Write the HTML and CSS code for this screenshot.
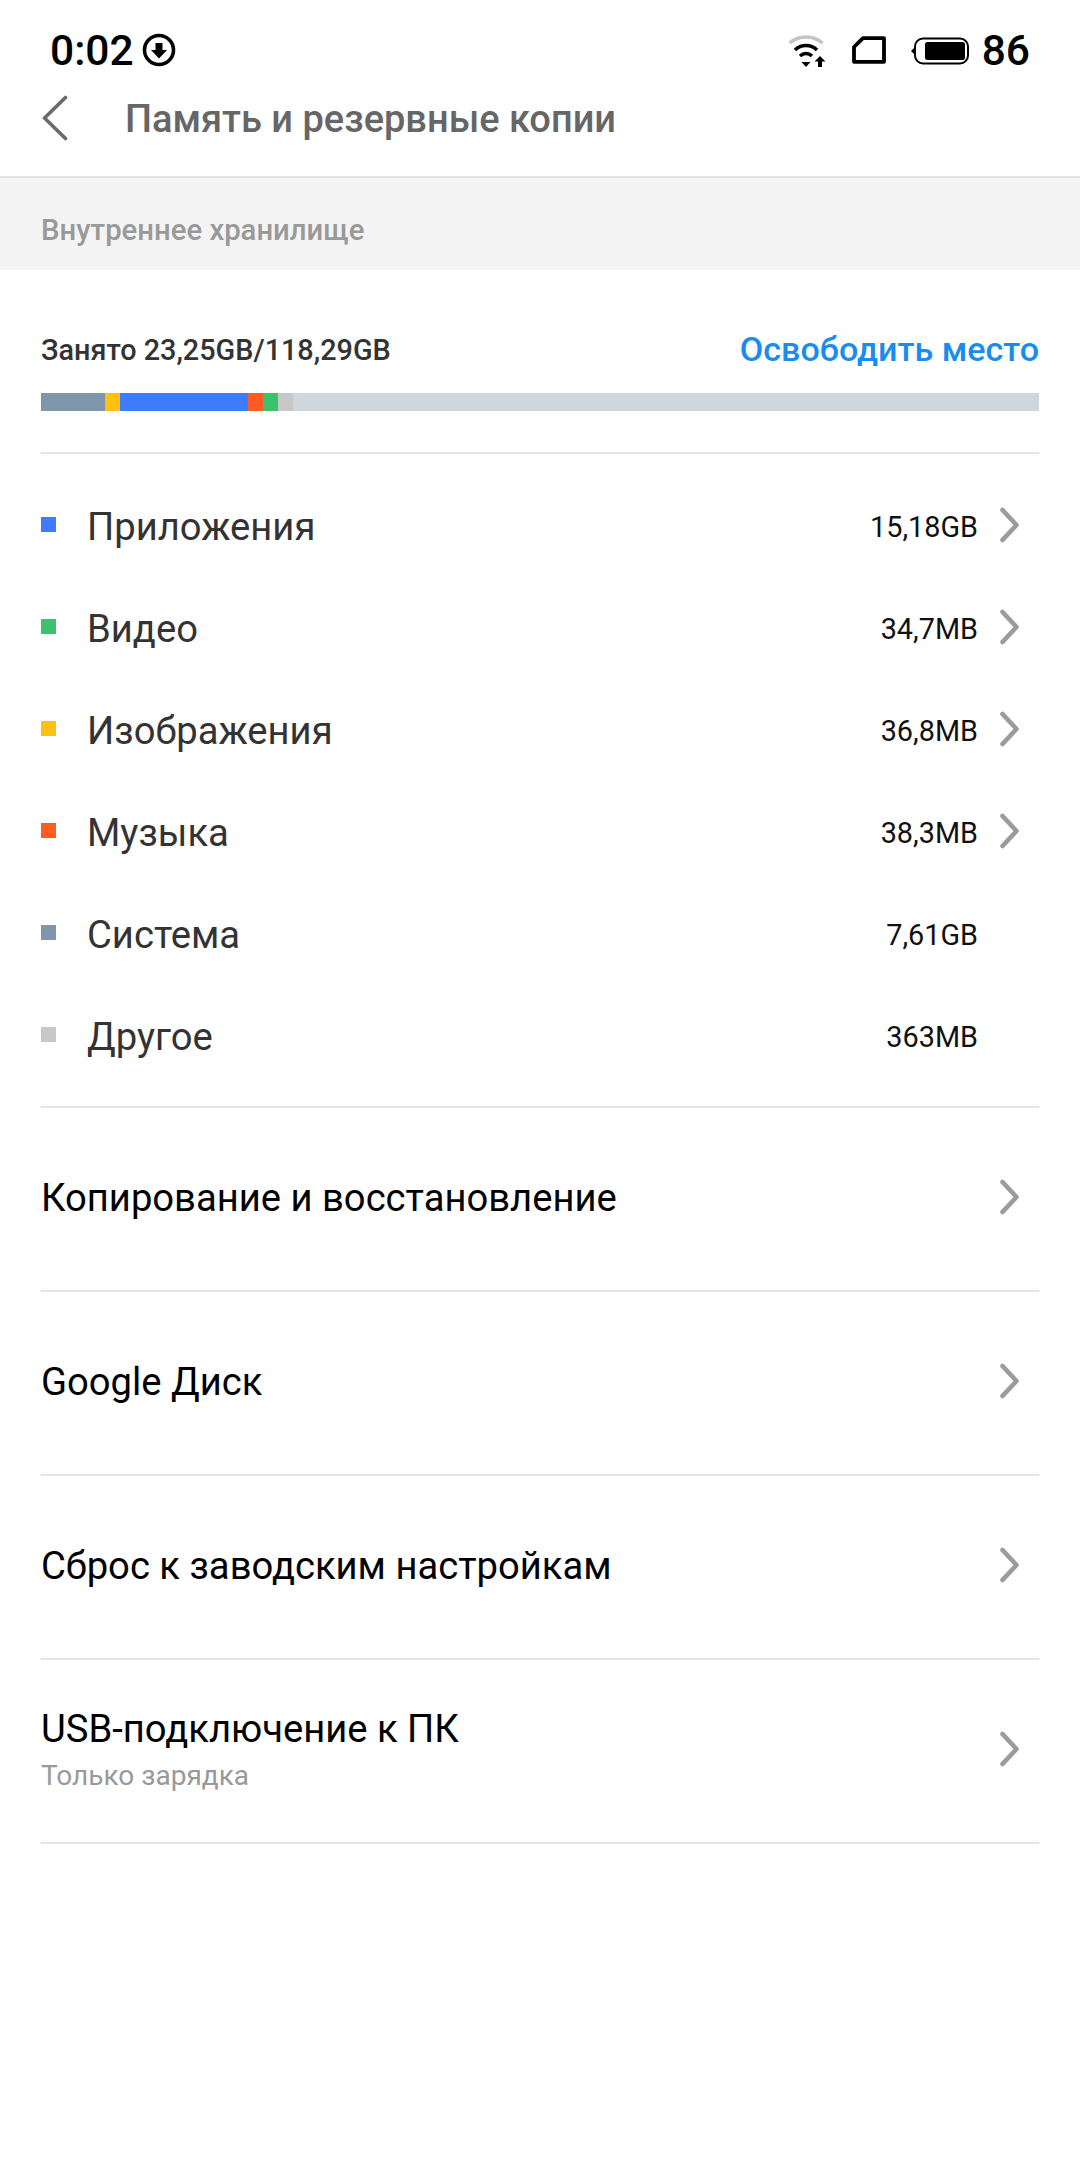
FILE: index.html
```html
<!DOCTYPE html>
<html lang="ru">
<head>
<meta charset="utf-8">
<title>Память и резервные копии</title>
<link rel="stylesheet" href="styles.css">
</head>
<body>
<div class="status">
  <div class="status-left">
    <span class="time">0:02</span>
    <svg class="ic-dl" width="34" height="34" viewBox="0 0 34 34"><circle cx="17" cy="17" r="14.5" fill="none" stroke="#000" stroke-width="3.6"/><path d="M13.500 10h7v7h4.500L17 25.500 9 17h4.500z" fill="#000"/></svg>
  </div>
  <div class="status-right">
    <svg class="ic-wifi" width="38" height="32" viewBox="0 0 38 32"><path d="M1.500 8C11 0 25 0 34.500 8" fill="none" stroke="#c4c4c4" stroke-width="3.500"/><path d="M7 15C13 9 23 9 29 15" fill="none" stroke="#000" stroke-width="3.500"/><path d="M12 21C15.500 17.500 20.500 17.500 24 21" fill="none" stroke="#000" stroke-width="3.500"/><path d="M13.500 27h9L18 32z" fill="#000"/><path d="M32 21l5.500 5.500H34v5.500h-4v-5.500h-3.500z" fill="#000"/></svg>
    <svg class="ic-sim" width="34" height="28" viewBox="0 0 34 28"><path d="M11 2.200H32V25.800H2V11z" fill="none" stroke="#000" stroke-width="3.800" stroke-linejoin="round"/></svg>
    <svg class="ic-batt" width="58" height="28" viewBox="0 0 58 28"><path d="M0 14l4-4v8z" fill="#000"/><rect x="4" y="1.500" width="53" height="25" rx="8" fill="none" stroke="#000" stroke-width="2"/><rect x="14" y="5" width="40" height="18" rx="2.500" fill="#000"/></svg>
    <span class="batt-num">86</span>
  </div>
</div>

<header class="appbar">
  <svg class="back" width="30" height="46" viewBox="0 0 30 46"><path d="M24.500 2.500L3.500 23l21 20.500" fill="none" stroke="#6a6a6a" stroke-width="3.600" stroke-linecap="round" stroke-linejoin="round"/></svg>
  <h1 class="title">Память и резервные копии</h1>
</header>

<div class="section-head">Внутреннее хранилище</div>

<section class="summary">
  <div class="summary-top">
    <span class="used">Занято 23,25GB/118,29GB</span>
    <span class="free">Освободить место</span>
  </div>
  <div class="bar">
    <i class="seg c-sys w64"></i><i class="seg c-img w15"></i><i class="seg c-app w128"></i><i class="seg c-mus w15"></i><i class="seg c-vid w15"></i><i class="seg c-oth w15"></i>
  </div>
</section>

<ul class="cats">
  <li class="cat"><i class="dot c-app"></i><span class="cat-name">Приложения</span><span class="cat-size">15,18GB</span><svg class="chev" width="24" height="36" viewBox="0 0 24 36"><path d="M5.500 3L19.500 18L5.500 33" fill="none" stroke="#9b9b9b" stroke-width="4.600" stroke-linecap="round" stroke-linejoin="round"/></svg></li>
  <li class="cat"><i class="dot c-vid"></i><span class="cat-name">Видео</span><span class="cat-size">34,7MB</span><svg class="chev" width="24" height="36" viewBox="0 0 24 36"><path d="M5.500 3L19.500 18L5.500 33" fill="none" stroke="#9b9b9b" stroke-width="4.600" stroke-linecap="round" stroke-linejoin="round"/></svg></li>
  <li class="cat"><i class="dot c-img"></i><span class="cat-name">Изображения</span><span class="cat-size">36,8MB</span><svg class="chev" width="24" height="36" viewBox="0 0 24 36"><path d="M5.500 3L19.500 18L5.500 33" fill="none" stroke="#9b9b9b" stroke-width="4.600" stroke-linecap="round" stroke-linejoin="round"/></svg></li>
  <li class="cat"><i class="dot c-mus"></i><span class="cat-name">Музыка</span><span class="cat-size">38,3MB</span><svg class="chev" width="24" height="36" viewBox="0 0 24 36"><path d="M5.500 3L19.500 18L5.500 33" fill="none" stroke="#9b9b9b" stroke-width="4.600" stroke-linecap="round" stroke-linejoin="round"/></svg></li>
  <li class="cat"><i class="dot c-sys"></i><span class="cat-name">Система</span><span class="cat-size">7,61GB</span><span class="chev-space"></span></li>
  <li class="cat"><i class="dot c-oth"></i><span class="cat-name">Другое</span><span class="cat-size">363MB</span><span class="chev-space"></span></li>
</ul>

<ul class="menu">
  <li class="item"><div class="item-text"><span class="item-name">Копирование и восстановление</span></div><svg class="chev" width="24" height="36" viewBox="0 0 24 36"><path d="M5.500 3L19.500 18L5.500 33" fill="none" stroke="#9b9b9b" stroke-width="4.600" stroke-linecap="round" stroke-linejoin="round"/></svg></li>
  <li class="item"><div class="item-text"><span class="item-name">Google Диск</span></div><svg class="chev" width="24" height="36" viewBox="0 0 24 36"><path d="M5.500 3L19.500 18L5.500 33" fill="none" stroke="#9b9b9b" stroke-width="4.600" stroke-linecap="round" stroke-linejoin="round"/></svg></li>
  <li class="item"><div class="item-text"><span class="item-name">Сброс к заводским настройкам</span></div><svg class="chev" width="24" height="36" viewBox="0 0 24 36"><path d="M5.500 3L19.500 18L5.500 33" fill="none" stroke="#9b9b9b" stroke-width="4.600" stroke-linecap="round" stroke-linejoin="round"/></svg></li>
  <li class="item"><div class="item-text"><span class="item-name">USB-подключение к ПК</span><span class="item-sub">Только зарядка</span></div><svg class="chev" width="24" height="36" viewBox="0 0 24 36"><path d="M5.500 3L19.500 18L5.500 33" fill="none" stroke="#9b9b9b" stroke-width="4.600" stroke-linecap="round" stroke-linejoin="round"/></svg></li>
</ul>
</body>
</html>
```
FILE: styles.css
```css
* { box-sizing: border-box; }
html, body { margin: 0; padding: 0; }
body { width: 1080px; height: 2160px; background: #fff; font-family: Roboto, "Noto Sans", sans-serif; color: #000; overflow: hidden; }
ul { list-style: none; margin: 0; padding: 0; }

.status { height: 76px; padding: 26px 50px 0 50px; display: flex; justify-content: space-between; align-items: flex-start; }
.status-left, .status-right { display: flex; align-items: center; height: 50px; }
.time { font-size: 42.5px; font-weight: 500; line-height: 50px; }
.ic-dl { margin-left: 8px; margin-top: -3px; }
.ic-wifi { margin-right: 26.5px; }
.ic-sim { margin-right: 25px; margin-top: -2px; }
.ic-batt { margin-right: 12.5px; }
.batt-num { font-size: 42.5px; font-weight: 500; line-height: 50px; }

.appbar { height: 102px; display: flex; align-items: flex-start; padding: 19px 0 0 41px; border-bottom: 2px solid #e4e4e4; }
.back { flex: none; }
.title { margin: 1px 0 0 54px; font-size: 38px; font-weight: 500; line-height: 46px; color: #666; }

.section-head { height: 92px; background: #f4f4f4; padding: 14px 41px 0; font-size: 29.3px; font-weight: 500; line-height: 76px; color: #999; }

.summary { margin: 0 41px; height: 184px; border-bottom: 2px solid #e4e4e4; padding-top: 58px; }
.summary-top { display: flex; justify-content: space-between; align-items: center; height: 44px; }
.used { font-size: 28.8px; font-weight: 500; color: #333; }
.free { font-size: 34.1px; font-weight: 500; color: #198cf0; margin-top: -3px; }
.bar { display: flex; height: 18px; margin-top: 21px; background: #cfd6dc; }
.seg { display: block; flex: none; height: 100%; }
.w64 { width: 64px; } .w15 { width: 15px; } .w128 { width: 128px; }

.c-sys { background: #7f96ac; }
.c-img { background: #ffc014; }
.c-app { background: #3f7bff; }
.c-mus { background: #ff5c23; }
.c-vid { background: #3cc26c; }
.c-oth { background: #c8c8c8; }

.cats { margin: 0 41px; padding: 22px 0 18px; border-bottom: 2px solid #e4e4e4; }
.cat { height: 102px; display: flex; align-items: center; }
.dot { flex: none; width: 15px; height: 15px; margin-right: 31px; margin-top: -5px; }
.cat-name { flex: 1; font-size: 38.2px; color: #333; }
.cat-size { font-size: 28.8px; color: #111; }
.chev, .chev-space { flex: none; width: 24px; height: 36px; margin-left: 19px; margin-right: 18px; }
.cats .chev { margin-top: -5px; }

.item { height: 184px; margin: 0 41px; display: flex; align-items: center; border-bottom: 2px solid #e4e4e4; }
.item .chev { margin-top: -4px; }
.item-text { flex: 1; display: flex; flex-direction: column; margin-top: -2px; }
.item-name { font-size: 38.2px; line-height: 44px; color: #000; }
.item-sub { font-size: 28px; line-height: 36px; color: #999; margin-top: 7px; }
```
